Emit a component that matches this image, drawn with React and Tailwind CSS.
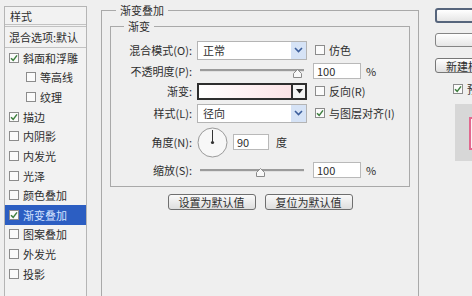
import React from 'react'

const layers = [
  { t: '斜面和浮雕', c: true },
  { t: '等高线', indent: true },
  { t: '纹理', indent: true },
  { t: '描边', c: true },
  { t: '内阴影' },
  { t: '内发光' },
  { t: '光泽' },
  { t: '颜色叠加' },
  { t: '渐变叠加', c: true, sel: true },
  { t: '图案叠加' },
  { t: '外发光' },
  { t: '投影' }
]

function Check({ checked }) {
  return (
    <span className="w-[10px] h-[10px] border border-[#8c8c8c] bg-[#fbfbfb] flex items-center justify-center shrink-0">
      {checked && (
        <svg width="8" height="8" viewBox="0 0 8 8">
          <path d="M1 4.2 L3.2 6.4 L7 1.4" fill="none" stroke="#3f7f3f" strokeWidth="1.5" />
        </svg>
      )}
    </span>
  )
}

function Select({ value }) {
  return (
    <div className="w-[110px] h-[19px] border border-[#b4b4b4] bg-white flex items-stretch">
      <span className="flex-1 pl-[5px] flex items-center">{value}</span>
      <span className="w-[15px] bg-[#d6e3f6] flex items-center justify-center">
        <svg width="9" height="6" viewBox="0 0 9 6">
          <path d="M1 1 L4.5 4.5 L8 1" fill="none" stroke="#3d5f9c" strokeWidth="1.6" />
        </svg>
      </span>
    </div>
  )
}

function Slider({ pos }) {
  return (
    <div className="relative w-[110px] h-[14px] flex items-center px-[3px]">
      <div className="w-full h-[3px] bg-[#9b9b9b] border-b border-[#e0e0e0]" />
      <svg
        className="absolute top-[5px]"
        style={{ left: pos }}
        width="9"
        height="9"
        viewBox="0 0 9 9"
      >
        <path d="M4.5 0.5 L8.5 4.5 V8.5 H0.5 V4.5 Z" fill="#f8f8f8" stroke="#8a8a8a" />
      </svg>
    </div>
  )
}

function Field({ value, w = 'w-[48px]' }) {
  return (
    <div className={`${w} h-[16px] border border-[#b9b9b9] bg-white pl-[3px] flex items-center`}>
      {value}
    </div>
  )
}

function Label({ children }) {
  return <span className="w-[82px] text-right pr-[1px] shrink-0 whitespace-nowrap">{children}</span>
}

function Button({ children }) {
  return (
    <div className="w-[88px] h-[16px] border border-[#6f6f6f] rounded-[3px] bg-gradient-to-b from-[#fafafa] to-[#dedede] flex items-center justify-center">
      {children}
    </div>
  )
}

export default function App() {
  return (
    <div className="w-[472px] h-[296px] overflow-hidden bg-[#efefef] flex text-[11px] leading-[14px] text-[#2e2e2e] font-['Noto_Sans_CJK_SC','Noto_Sans',sans-serif]">
      {/* layer list */}
      <div className="ml-[4px] mt-[6px] w-[83px] h-[300px] shrink-0 border border-[#b5b5b5] bg-[#f2f2f2] flex flex-col">
        <div className="h-[18px] border-b border-[#c2c2c2] pl-[5px] flex items-center">样式</div>
        <div className="mt-[1px] h-[22px] border-t border-b border-[#c2c2c2] pl-[4px] flex items-center whitespace-nowrap overflow-hidden">
          混合选项:默认
        </div>
        {layers.map((l) => (
          <div
            key={l.t}
            className={`h-[19.64px] flex items-center gap-[4px] whitespace-nowrap ${l.indent ? 'pl-[21px]' : 'pl-[4px]'} ${l.sel ? 'bg-[#2c5ec2] text-[#d3e2ff]' : ''}`}
          >
            <Check checked={l.c} />
            <span>{l.t}</span>
          </div>
        ))}
      </div>

      {/* main */}
      <fieldset className="ml-[14px] mt-[3px] w-[318px] h-[300px] shrink-0 border border-[#a9a9a9] px-[8px]">
        <legend className="ml-[6px] px-[4px]">渐变叠加</legend>
        <fieldset className="mt-[2px] border border-[#a9a9a9] pt-[7px] pb-[6px]">
          <legend className="ml-[13px] px-[4px]">渐变</legend>

          <div className="h-[20px] flex items-center">
            <Label>混合模式(O):</Label>
            <div className="ml-[4px]"><Select value="正常" /></div>
            <div className="ml-[8px] flex items-center gap-[4px]"><Check /><span>仿色</span></div>
          </div>

          <div className="h-[21px] flex items-center">
            <Label>不透明度(P):</Label>
            <div className="ml-[4px]"><Slider pos={96} /></div>
            <div className="ml-[6px]"><Field value="100" /></div>
            <span className="ml-[5px]">%</span>
          </div>

          <div className="h-[20px] flex items-center">
            <Label>渐变:</Label>
            <div className="ml-[4px] w-[110px] h-[17px] border-2 border-[#2e2e2e] flex">
              <div className="flex-1 bg-gradient-to-r from-white to-[#fbe3e6]" />
              <div className="w-[14px] border-l-2 border-[#2e2e2e] bg-[#f4f4f4] flex items-center justify-center">
                <svg width="7" height="5" viewBox="0 0 7 5"><path d="M0 0 H7 L3.5 4.5 Z" fill="#1e1e1e" /></svg>
              </div>
            </div>
            <div className="ml-[8px] flex items-center gap-[4px]"><Check /><span>反向(R)</span></div>
          </div>

          <div className="mt-[2px] h-[20px] flex items-center">
            <Label>样式(L):</Label>
            <div className="ml-[4px]"><Select value="径向" /></div>
            <div className="ml-[8px] flex items-center gap-[4px]"><Check checked /><span>与图层对齐(I)</span></div>
          </div>

          <div className="mt-[4px] h-[30px] flex items-center">
            <Label>角度(N):</Label>
            <svg className="ml-[4px]" width="31" height="31" viewBox="0 0 31 31">
              <circle cx="15.5" cy="15.5" r="14.5" fill="#f7f7f7" stroke="#9a9a9a" />
              <line x1="15.5" y1="15.5" x2="15.5" y2="3" stroke="#333" strokeWidth="1" />
              <circle cx="15.5" cy="15.5" r="1.6" fill="#333" />
            </svg>
            <div className="ml-[5px]"><Field value="90" w="w-[36px]" /></div>
            <span className="ml-[7px]">度</span>
          </div>

          <div className="mt-[3px] h-[20px] flex items-center">
            <Label>缩放(S):</Label>
            <div className="ml-[4px]"><Slider pos={59} /></div>
            <div className="ml-[6px]"><Field value="100" /></div>
            <span className="ml-[5px]">%</span>
          </div>
        </fieldset>

        <div className="mt-[7px] flex justify-center gap-[9px]">
          <Button>设置为默认值</Button>
          <Button>复位为默认值</Button>
        </div>
      </fieldset>

      {/* right column */}
      <div className="ml-[16px] pt-[8px] flex flex-col shrink-0 w-[60px]">
        <div className="w-[60px] h-[15px] border-2 border-[#56657c] rounded-[3px] bg-gradient-to-b from-white to-[#e6e6e6]" />
        <div className="mt-[10px] w-[60px] h-[14px] border border-[#858585] rounded-[3px] bg-gradient-to-b from-white to-[#e6e6e6]" />
        <div className="mt-[11px] w-[60px] h-[15px] border border-[#777] rounded-[3px] bg-gradient-to-b from-white to-[#e0e0e0] pl-[10px] flex items-center whitespace-nowrap overflow-hidden">
          新建样式(W)...
        </div>
        <div className="mt-[9px] ml-[18px] flex items-center gap-[4px] whitespace-nowrap">
          <Check checked />
          <span>预览(V)</span>
        </div>
        <div className="mt-[8px] ml-[20px] w-[40px] h-[57px] bg-[#d7d7d7] pt-[13px] pl-[14px]">
          <div className="w-[30px] h-[33px] border-2 border-[#e2698f] bg-[#faf3f5]" />
        </div>
      </div>
    </div>
  )
}
